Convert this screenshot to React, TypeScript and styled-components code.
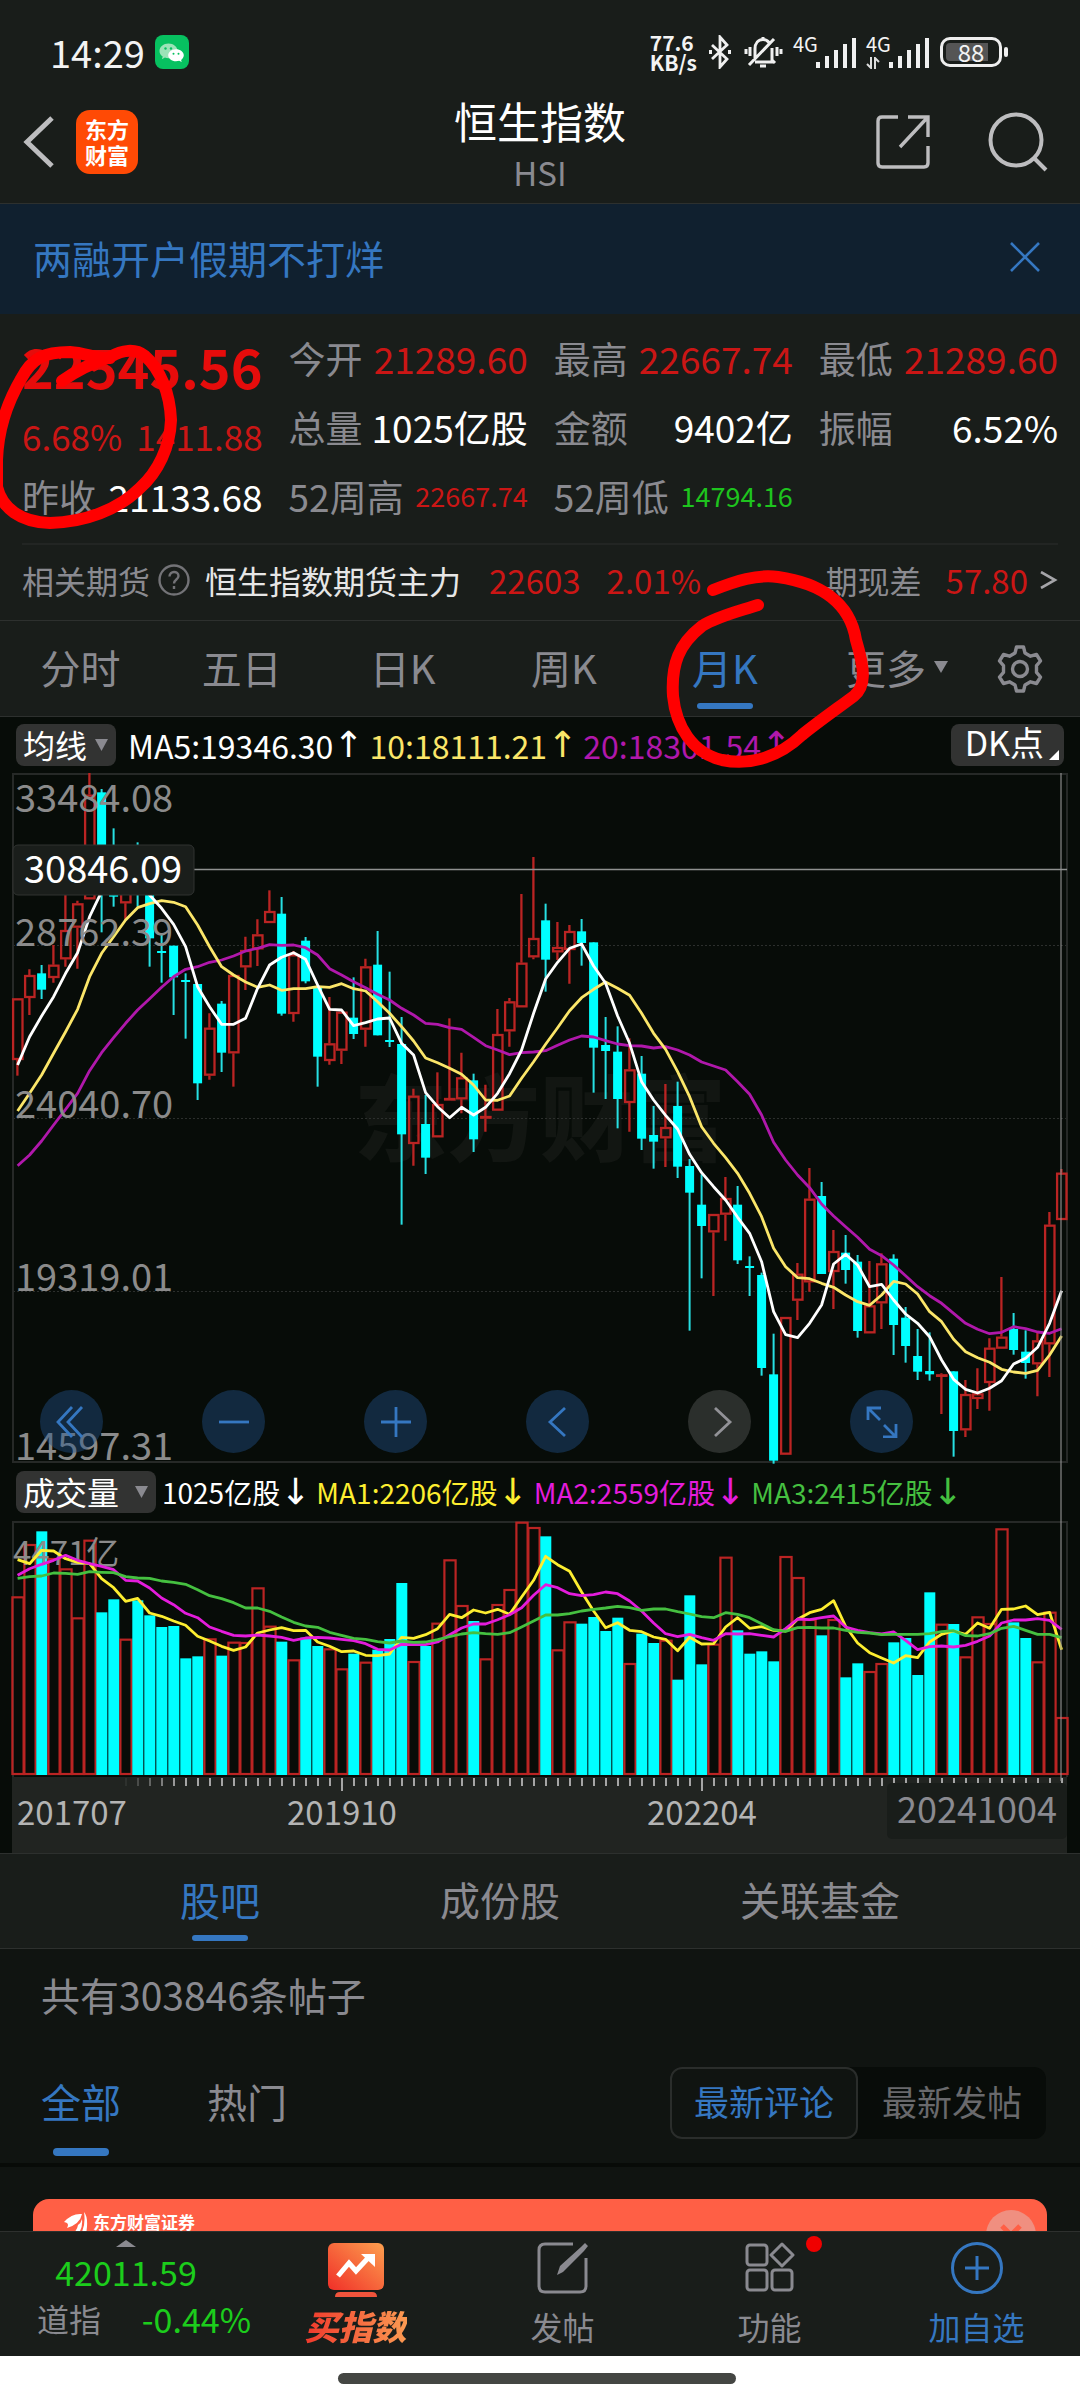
import React from "react";
import styled, { createGlobalStyle, css } from "styled-components";

const C = {
  panel: "#191d1a",
  page: "#101411",
  chart: "#070c08",
  line: "#2d302e",
  label: "#8a8a90",
  red: "#cb1615",
  hot: "#e60c0b",
  green: "#1ec41e",
  blue: "#3577c1",
  cyan: "#00ffff",
  candle: "#ba2423",
};

const Global = createGlobalStyle`
  *, *::before, *::after { box-sizing: border-box; }
  body { margin: 0; background: ${C.panel}; }
  body, button, select {
    font-family: "Noto Sans CJK SC", "Noto Sans", sans-serif;
  }
  button, select {
    appearance: none; border: 0; margin: 0; padding: 0;
    background: none; color: inherit; font-size: inherit; line-height: inherit; cursor: pointer;
  }
  a { color: inherit; text-decoration: none; }
  svg { display: block; }
`;

/* ---------- data ---------- */

type Candle = ["u" | "d", number, number, number, number];

/* kind, high, body top, body bottom, low, in thirds of a plot unit */
const candles: Candle[] = [
  ["u", 715, 715, 900, 947], ["u", 628, 645, 714, 765], ["d", 615, 640, 689, 717], ["u", 555, 614, 654, 668],
  ["u", 380, 510, 598, 620], ["u", 422, 430, 503, 626], ["u", 39, 104, 418, 418], ["d", 87, 97, 300, 517],
  ["d", 205, 290, 410, 440], ["u", 280, 320, 430, 480], ["d", 247, 290, 380, 440], ["d", 300, 330, 535, 620],
  ["d", 520, 573, 577, 668], ["d", 557, 557, 652, 765], ["d", 640, 660, 666, 836], ["d", 672, 672, 970, 1020],
  ["u", 760, 803, 947, 959], ["d", 723, 731, 878, 936], ["u", 645, 645, 880, 980], ["u", 530, 570, 622, 690],
  ["u", 478, 523, 568, 618], ["u", 391, 453, 489, 489], ["d", 411, 461, 761, 767], ["u", 573, 583, 762, 785],
  ["d", 531, 542, 664, 670], ["d", 680, 682, 890, 980], ["u", 711, 850, 903, 914], ["u", 755, 755, 872, 912],
  ["d", 652, 773, 822, 837], ["u", 596, 619, 809, 860], ["d", 513, 614, 826, 826], ["d", 635, 840, 846, 861],
  ["d", 771, 852, 1123, 1394], ["u", 986, 1007, 1152, 1217], ["d", 1005, 1092, 1193, 1242], ["u", 937, 1032, 1132, 1132],
  ["u", 775, 1014, 1019, 1019], ["u", 878, 952, 1018, 1060], ["d", 941, 961, 1138, 1176], ["u", 974, 1068, 1076, 1115],
  ["u", 747, 822, 1052, 1052], ["u", 714, 724, 814, 860], ["u", 402, 608, 742, 742], ["u", 291, 534, 592, 598],
  ["d", 431, 481, 599, 695], ["u", 486, 561, 577, 600], ["u", 495, 513, 570, 671], ["d", 477, 514, 549, 617],
  ["d", 547, 547, 863, 998], ["d", 771, 855, 873, 1017], ["d", 799, 875, 1017, 1105], ["u", 835, 928, 1029, 1115],
  ["d", 888, 941, 1136, 1170], ["d", 1038, 1125, 1145, 1226], ["u", 972, 1101, 1135, 1221], ["d", 965, 1038, 1220, 1254],
  ["d", 1197, 1218, 1298, 1712], ["d", 1243, 1334, 1398, 1555], ["u", 1362, 1362, 1417, 1608], ["u", 1251, 1314, 1364, 1442],
  ["d", 1278, 1334, 1501, 1512], ["d", 1489, 1518, 1523, 1608], ["d", 1538, 1545, 1824, 1847], ["d", 1721, 1843, 2102, 2111],
  ["u", 1671, 1671, 2084, 2084], ["u", 1509, 1541, 1622, 1680], ["u", 1224, 1316, 1567, 1595], ["d", 1266, 1308, 1542, 1542],
  ["u", 1410, 1473, 1536, 1647], ["d", 1425, 1478, 1530, 1571], ["d", 1485, 1505, 1713, 1733], ["u", 1503, 1636, 1720, 1720],
  ["u", 1480, 1510, 1630, 1707], ["d", 1483, 1496, 1695, 1785], ["d", 1641, 1673, 1758, 1808], ["d", 1707, 1788, 1835, 1860],
  ["d", 1717, 1833, 1843, 1862], ["u", 1840, 1843, 1848, 1962], ["d", 1834, 1834, 2013, 2090], ["u", 1860, 1902, 2011, 2031],
  ["u", 1825, 1900, 1917, 1947], ["u", 1735, 1763, 1869, 1952], ["u", 1551, 1730, 1766, 1766], ["d", 1659, 1707, 1770, 1784],
  ["d", 1711, 1775, 1809, 1856], ["u", 1718, 1741, 1813, 1909], ["u", 1356, 1394, 1753, 1851], ["u", 1227, 1238, 1380, 1380],
];

const ma5 = [915, 830, 768, 710, 640, 578, 470, 395, 340, 310, 335, 405, 445, 493, 560, 680, 740, 793, 793, 775, 685, 615, 592, 578, 598, 675, 748, 750, 797, 788, 777, 774, 850, 885, 998, 1040, 1073, 1042, 1065, 1042, 1000, 941, 870, 760, 657, 607, 565, 552, 618, 670, 768, 850, 965, 1020, 1066, 1107, 1183, 1238, 1280, 1320, 1372, 1420, 1505, 1655, 1724, 1733, 1690, 1635, 1512, 1483, 1515, 1580, 1573, 1620, 1662, 1690, 1730, 1800, 1858, 1888, 1899, 1885, 1862, 1812, 1795, 1762, 1690, 1592];
const ma10 = [1053, 1000, 945, 880, 815, 748, 650, 580, 530, 480, 443, 431, 422, 427, 440, 495, 560, 620, 645, 666, 682, 675, 691, 686, 686, 680, 682, 671, 686, 693, 725, 760, 800, 843, 894, 908, 925, 943, 975, 1020, 1021, 1008, 955, 905, 853, 803, 752, 713, 688, 666, 685, 706, 760, 820, 868, 935, 1010, 1100, 1150, 1193, 1240, 1300, 1370, 1465, 1520, 1553, 1556, 1570, 1582, 1605, 1625, 1636, 1605, 1564, 1572, 1602, 1655, 1685, 1738, 1775, 1793, 1807, 1828, 1836, 1840, 1831, 1785, 1728];
const ma20 = [1217, 1185, 1143, 1095, 1048, 1000, 932, 878, 833, 790, 750, 716, 682, 650, 628, 620, 607, 600, 588, 573, 565, 554, 556, 555, 563, 585, 626, 645, 665, 683, 703, 720, 745, 765, 790, 793, 803, 808, 832, 857, 870, 884, 878, 876, 872, 856, 840, 828, 831, 842, 852, 857, 858, 864, 860, 870, 885, 906, 918, 930, 965, 1003, 1065, 1147, 1200, 1245, 1283, 1332, 1368, 1400, 1432, 1468, 1487, 1515, 1547, 1580, 1607, 1630, 1660, 1690, 1708, 1721, 1717, 1700, 1706, 1716, 1720, 1706];

const volumes = [288, 131, 93, 173, 204, 351, 118, 336, 297, 415, 300, 345, 380, 377, 474, 468, 414, 466, 424, 425, 261, 376, 424, 477, 412, 437, 444, 504, 460, 484, 448, 416, 248, 482, 437, 367, 177, 314, 362, 474, 311, 266, 64, 80, 108, 447, 363, 370, 350, 392, 352, 488, 400, 428, 418, 538, 285, 492, 430, 169, 390, 460, 453, 483, 167, 230, 356, 405, 356, 531, 489, 512, 488, 426, 413, 524, 276, 370, 371, 468, 348, 368, 84, 366, 413, 483, 334, 650];
const vol1 = [178, 190, 150, 152, 175, 186, 190, 235, 262, 303, 294, 338, 348, 362, 375, 408, 422, 438, 450, 440, 398, 389, 382, 391, 390, 425, 438, 454, 452, 465, 466, 461, 411, 414, 403, 385, 342, 352, 329, 338, 327, 342, 290, 240, 168, 193, 213, 275, 332, 382, 367, 390, 394, 410, 417, 451, 411, 431, 430, 380, 352, 384, 379, 390, 392, 357, 337, 327, 301, 378, 428, 457, 473, 488, 466, 472, 425, 402, 392, 402, 368, 384, 327, 326, 317, 343, 336, 448];
const vol2 = [225, 205, 192, 180, 165, 180, 190, 198, 208, 240, 242, 263, 293, 313, 339, 352, 380, 393, 405, 407, 404, 407, 411, 420, 413, 411, 413, 417, 421, 430, 447, 449, 432, 433, 433, 425, 403, 383, 371, 371, 358, 343, 322, 285, 253, 262, 280, 286, 283, 275, 280, 302, 332, 368, 400, 409, 402, 412, 420, 400, 401, 400, 405, 410, 385, 356, 358, 352, 347, 380, 390, 397, 401, 395, 420, 448, 439, 437, 440, 435, 423, 407, 368, 359, 359, 355, 360, 387];
const vol3 = [234, 229, 227, 218, 219, 222, 214, 216, 217, 229, 233, 234, 242, 246, 252, 268, 286, 295, 307, 323, 323, 333, 350, 366, 377, 381, 396, 405, 414, 417, 424, 428, 422, 426, 425, 418, 409, 401, 397, 400, 402, 397, 380, 362, 344, 344, 340, 332, 327, 323, 318, 322, 330, 326, 326, 334, 341, 349, 352, 337, 342, 352, 370, 388, 393, 382, 381, 383, 383, 390, 396, 398, 403, 402, 402, 402, 400, 394, 391, 406, 407, 400, 384, 378, 390, 402, 402, 412];

const xAt = (i: number) => 17.6 + i * 12;
const priceY = (v: number) => (v - 39) / 3;
const volumeY = (v: number) => (v - 62) / 3;
const points = (values: number[], y: (v: number) => number) =>
  values.map((v, i) => `${xAt(i).toFixed(1)},${y(v).toFixed(1)}`).join(" ");

/* ---------- layout ---------- */

const Screen = styled.div`
  position: relative;
  display: flex;
  flex-direction: column;
  height: 100vh;
  overflow: hidden;
  background: ${C.panel};
  color: #fff;
`;

const StatusBar = styled.div`
  display: flex;
  align-items: center;
  justify-content: space-between;
  height: 88px;
  padding: 16px 72px 0 50px;
`;
const StatusGroup = styled.div<{ $gap: number }>`
  display: flex;
  align-items: center;
  gap: ${(p) => p.$gap}px;
  color: #f3f3f3;
`;
const Clock = styled.span`
  font-size: 38px;
  line-height: 44px;
`;
const NetSpeed = styled.span`
  font: 700 21px/20px "Noto Sans CJK SC", sans-serif;
  text-align: left;
`;
const Signal = styled.span`
  display: flex;
`;
const SignalTag = styled.span`
  display: flex;
  flex-direction: column;
  gap: 4px;
  width: 23px;
  height: 34px;
  font: 400 20px/18px "Noto Sans CJK SC", sans-serif;
`;
const Battery = styled.span`
  display: flex;
  align-items: center;
  gap: 2px;
  &::after {
    content: "";
    width: 4px;
    height: 10px;
    border-radius: 2px;
    background: #eee;
  }
`;
const BatteryBody = styled.span`
  display: grid;
  padding: 3px;
  width: 62px;
  height: 30px;
  border: 3px solid #eee;
  border-radius: 10px;
  span {
    border-radius: 4px;
    background: linear-gradient(90deg, #555 84%, transparent 84%);
    font-size: 24px;
    line-height: 18px;
    text-align: center;
  }
`;

const Header = styled.header`
  display: grid;
  grid-template-columns: 1fr auto 1fr;
  align-items: center;
  height: 116px;
  padding: 0 32px 8px;
  border-bottom: 1px solid ${C.line};
`;
const HeaderSide = styled.div<{ $end?: boolean }>`
  display: flex;
  align-items: center;
  gap: ${(p) => (p.$end ? 58 : 18)}px;
  justify-content: ${(p) => (p.$end ? "flex-end" : "flex-start")};
  margin-left: ${(p) => (p.$end ? 0 : -10)}px;
`;
const AppLogo = styled.a`
  width: 62px;
  height: 64px;
  padding-top: 5px;
  border-radius: 14px;
  background: #ff4a05;
  color: #fff;
  font-size: 22px;
  font-weight: 700;
  line-height: 26px;
  text-align: center;
`;
const Title = styled.h1`
  margin: 0;
  font-size: 43px;
  font-weight: 400;
  line-height: 60px;
  text-align: center;
`;
const Ticker = styled.div`
  color: ${C.label};
  font-size: 33px;
  line-height: 44px;
  text-align: center;
`;

const Banner = styled.div`
  display: flex;
  align-items: center;
  justify-content: space-between;
  height: 110px;
  padding: 0 40px 4px 33px;
  background: #10202f;
  color: ${C.blue};
  font-size: 39px;
`;

const Quote = styled.section`
  display: grid;
  grid-template-columns: repeat(4, 1fr);
  column-gap: 26px;
  margin: 0 22px;
  padding: 9px 0 13px;
  border-bottom: 2px solid #222523;
`;
const QuoteCell = styled.div`
  display: flex;
  align-items: center;
  justify-content: space-between;
  height: 69px;
  font-size: 37px;
  white-space: nowrap;
`;
const Muted = styled.span`
  color: ${C.label};
`;
const Value = styled.span<{ $tone?: string; $small?: boolean }>`
  color: ${(p) => p.$tone ?? "#fff"};
  font-size: ${(p) => (p.$small ? 27 : 37)}px;
`;
const LastPrice = styled.strong`
  padding-top: 16px;
  color: ${C.hot};
  font-size: 54px;
  font-weight: 700;
  line-height: 54px;
`;
const Change = styled.span`
  padding-top: 18px;
  color: ${C.red};
  font-size: 35px;
`;

const Futures = styled.a`
  display: flex;
  align-items: center;
  height: 75px;
  padding: 0 22px 6px;
  color: #e6e6e6;
  font-size: 32px;
  white-space: nowrap;
`;
const FuturesItem = styled.span<{ $tone?: string; $gap?: number; $push?: boolean; $figure?: boolean }>`
  color: ${(p) => p.$tone ?? "inherit"};
  font-size: ${(p) => (p.$figure ? 33 : 32)}px;
  margin-left: ${(p) => (p.$push ? "auto" : `${p.$gap ?? 0}px`)};
`;

const Tabs = styled.nav`
  display: flex;
  align-items: center;
  height: 97px;
  padding-right: 6px;
  border-top: 1px solid ${C.line};
  border-bottom: 1px solid ${C.line};
`;
const Tab = styled.button<{ $on?: boolean; $fit?: boolean }>`
  position: relative;
  display: flex;
  align-items: center;
  justify-content: center;
  flex: ${(p) => (p.$fit ? "none" : "3 1 0")};
  height: 100%;
  padding-bottom: 4px;
  color: ${(p) => (p.$on ? C.blue : C.label)};
  font-size: 40px;
  ${(p) =>
    p.$on &&
    css`
      &::after {
        content: "";
        position: absolute;
        bottom: 7px;
        left: 50%;
        width: 56px;
        height: 6px;
        margin-left: -28px;
        border-radius: 3px;
        background: ${C.blue};
      }
    `}
`;
const TabCaret = styled.span`
  width: 0;
  svg {
    margin-left: 8px;
  }
`;
const SettingsButton = styled.button`
  display: grid;
  flex: 2 1 0;
  place-items: center;
`;

const ChartArea = styled.section`
  position: relative;
  background: ${C.chart};
`;
const Legend = styled.div<{ $size: number }>`
  display: flex;
  align-items: center;
  gap: 6px;
  height: ${(p) => (p.$size > 30 ? 56 : 58)}px;
  padding: 0 16px;
  font-size: ${(p) => p.$size}px;
  white-space: nowrap;
`;
const LegendItem = styled.span<{ $tone: string }>`
  display: flex;
  align-items: center;
  color: ${(p) => p.$tone};
  i {
    font: normal 36px/40px "DejaVu Sans", sans-serif;
  }
`;
const Picker = styled.label<{ $gap: number; $after: number }>`
  position: relative;
  display: flex;
  align-items: center;
  height: 42px;
  margin-right: ${(p) => p.$after}px;
  border-radius: 8px;
  background: #323332;
  color: #fff;
  font-size: 32px;
  select {
    height: 42px;
    padding: 0 ${(p) => p.$gap + 20}px 2px 7px;
    line-height: 40px;
  }
  svg {
    position: absolute;
    right: 8px;
    pointer-events: none;
  }
`;
const DkButton = styled.button`
  display: flex;
  align-items: flex-end;
  gap: 5px;
  height: 42px;
  margin-left: auto;
  padding: 0 5px 6px 14px;
  border-radius: 8px;
  background: #323332;
  font-size: 34px;
  line-height: 36px;
`;
const Plot = styled.div`
  position: relative;
  svg.plot {
    width: 100%;
    height: auto;
    overflow: visible;
  }
`;
const PlotTools = styled.div`
  position: absolute;
  right: 0;
  bottom: 10px;
  left: 0;
  display: flex;
  justify-content: space-between;
  padding: 0 167px 0 40px;
`;
const ToolButton = styled.button<{ $off?: boolean }>`
  display: grid;
  place-items: center;
  width: 63px;
  height: 63px;
  border-radius: 50%;
  background: ${(p) => (p.$off ? "rgba(120, 120, 120, 0.32)" : "rgba(33, 83, 140, 0.42)")};
  color: ${(p) => (p.$off ? "#929297" : C.blue)};
`;
const Crosshair = styled.div`
  position: absolute;
  top: 56px;
  right: 18px;
  bottom: 72px;
  width: 2px;
  background: rgba(150, 150, 150, 0.55);
`;
const AxisText = styled.text`
  font-family: "Noto Sans CJK SC", sans-serif;
`;

const Sections = styled.nav`
  display: flex;
  justify-content: space-evenly;
  height: 96px;
  border-top: 1px solid ${C.line};
  border-bottom: 1px solid ${C.line};
`;
const Forum = styled.section`
  display: flex;
  flex-direction: column;
  background: ${C.page};
  border-bottom: 4px solid #080b08;
`;
const PostCount = styled.p`
  margin: 0;
  padding: 17px 41px 0;
  color: ${C.label};
  font-size: 39px;
  line-height: 56px;
`;
const ForumBar = styled.div`
  display: flex;
  align-items: center;
  gap: 86px;
  height: 141px;
  padding: 20px 34px 0 41px;
`;
const ForumTab = styled(Tab)`
  height: 110px;
  flex: none;
  &::after {
    bottom: 2px;
    height: 8px;
    border-radius: 4px;
  }
`;
const Segmented = styled.div`
  display: flex;
  height: 72px;
  margin-left: auto;
  border-radius: 12px;
  background: #080c09;
`;
const Segment = styled.button<{ $on?: boolean }>`
  width: 188px;
  padding-bottom: 4px;
  border: 2px solid ${(p) => (p.$on ? "#2a2d2b" : "transparent")};
  border-radius: 12px;
  background: ${(p) => (p.$on ? C.page : "transparent")};
  color: ${(p) => (p.$on ? C.blue : "#69696c")};
  font-size: 35px;
`;

const Feed = styled.main`
  flex: 1 1 0;
  min-height: 0;
  overflow: hidden;
  padding: 32px 33px 0;
  background: ${C.page};
`;
const Promo = styled.a`
  display: flex;
  align-items: flex-start;
  justify-content: space-between;
  height: 180px;
  padding: 11px 11px 0 31px;
  border-radius: 16px;
  background: #ff5f45;
`;
const PromoBrand = styled.span`
  display: flex;
  align-items: center;
  gap: 3px;
  color: #fff;
  font-size: 17px;
  font-weight: 700;
  line-height: 22px;
`;
const PromoClose = styled.span`
  display: grid;
  place-items: center;
  width: 50px;
  height: 50px;
  border-radius: 50%;
  background: #f08f80;
`;

const BottomNav = styled.nav`
  display: grid;
  grid-template-columns: 252fr repeat(4, 207fr);
  height: 125px;
  border-top: 1px solid ${C.line};
`;
const NavItem = styled.button<{ $tone?: string }>`
  position: relative;
  display: flex;
  flex-direction: column;
  align-items: center;
  justify-content: space-between;
  padding: 7px 0 9px;
  color: ${(p) => p.$tone ?? C.label};
  font-size: 32px;
  line-height: 42px;
`;
const Market = styled.a`
  display: flex;
  flex-direction: column;
  align-items: center;
  gap: 2px;
  padding: 8px 0 0;
  color: #1ccd1c;
  font-size: 34px;
  line-height: 45px;
`;
const MarketRow = styled.span`
  display: flex;
  justify-content: space-between;
  align-self: stretch;
  padding: 0 1px 0 37px;
  span {
    color: ${C.label};
    font-size: 32px;
  }
`;
const BuyLabel = styled.span`
  background: linear-gradient(90deg, #f0392c, #fb9a52);
  background-clip: text;
  -webkit-background-clip: text;
  color: transparent;
  font-size: 34px;
  font-style: italic;
  font-weight: 900;
`;
const Dot = styled.span`
  position: absolute;
  top: 4px;
  left: calc(50% + 36px);
  width: 16px;
  height: 16px;
  border-radius: 50%;
  background: #f00000;
`;
const HomeArea = styled.div`
  display: grid;
  place-items: center;
  height: 44px;
  background: #fff;
  padding-right: 6px;
  &::after {
    content: "";
    width: 37%;
    height: 11px;
    border-radius: 6px;
    background: #444643;
  }
`;
const Scribble = styled.svg`
  position: absolute;
  top: 0;
  left: 0;
  width: 100%;
  pointer-events: none;
`;

/* ---------- pieces ---------- */

const Triangle = ({ w, h, up }: { w: number; h: number; up?: boolean }) => (
  <svg width={w} height={h} viewBox="0 0 10 10" preserveAspectRatio="none" aria-hidden="true">
    <path d={up ? "M0 10h10L5 0z" : "M0 0h10L5 10z"} fill="#8a8a90" />
  </svg>
);

const Bars = () => (
  <svg width="41" height="34" viewBox="0 0 41 34" fill="#f0f0f0" aria-hidden="true">
    <rect x="0" y="27" width="4" height="6" />
    <rect x="9" y="21" width="4" height="12" />
    <rect x="18" y="15" width="4" height="18" />
    <rect x="27" y="9" width="4" height="24" />
    <rect x="36" y="3" width="4" height="30" />
  </svg>
);

const PriceChart = () => (
  <svg className="plot" viewBox="0 0 1080 690" role="img" aria-label="恒生指数 月K">
    <text x="354" y="381" fontSize="93" fontWeight="900" fill="#121612" fontFamily='"Noto Sans CJK SC", sans-serif'>东方财富</text>
    <g stroke="#2c2f2d" strokeWidth="1" strokeDasharray="2 2">
      <path d="M13 172.500H1067M13 345.500H1067M13 518.500H1067" />
    </g>
    <path d="M13 1H1067V689H13Z" fill="none" stroke="#262927" strokeWidth="2" />
    {candles.map(([kind, high, top, bottom, low], i) => {
      const x = xAt(i);
      const h = Math.max(2, (bottom - top) / 3);
      return kind === "d" ? (
        <g key={i}>
          <rect x={x - 1} y={priceY(high)} width="2" height={(low - high) / 3} fill="#27dfe2" />
          <rect x={x - 4.5} y={priceY(top)} width="9" height={h} fill={C.cyan} />
        </g>
      ) : (
        <g key={i} fill="none" stroke={C.candle} strokeWidth="2.300">
          <path d={`M${x - 0.2} ${priceY(high)}V${priceY(top)}M${x - 0.2} ${priceY(bottom)}V${priceY(low)}`} />
          <rect x={x - 4.5} y={priceY(top) + 1} width="9.400" height={Math.max(0.5, h - 2)} />
        </g>
      );
    })}
    <g fill="none" strokeWidth="2.800" strokeLinejoin="round">
      <polyline points={points(ma20, priceY)} stroke="#b018ab" />
      <polyline points={points(ma10, priceY)} stroke="#fbe669" />
      <polyline points={points(ma5, priceY)} stroke="#fff" />
    </g>
    <g fill="#8b8b8b" fontSize="38">
      <AxisText x="15" y="39">33484.08</AxisText>
      <AxisText x="15" y="173">28762.39</AxisText>
      <AxisText x="15" y="345">24040.70</AxisText>
      <AxisText x="15" y="518">19319.01</AxisText>
      <AxisText x="15" y="687">14597.31</AxisText>
    </g>
    <path d="M194 96.500H1067" stroke="#8f9190" strokeWidth="1.500" />
    <rect x="13" y="72" width="181" height="50" rx="5" fill="#1a1e1b" stroke="#303331" />
    <AxisText x="24" y="110" fill="#fff" fontSize="38">30846.09</AxisText>
  </svg>
);

const VolumeChart = () => (
  <svg className="plot" viewBox="0 0 1080 332" role="img" aria-label="成交量">
    <path d="M13 256V1H1067V256" fill="none" stroke="#262927" strokeWidth="2" />
    {volumes.map((v, i) => {
      const x = xAt(i);
      const y = volumeY(v);
      return candles[i][0] === "d" ? (
        <rect key={i} x={x - 5.3} y={y} width="11" height={254 - y} fill={C.cyan} />
      ) : (
        <rect key={i} x={x - 5.2} y={y + 1} width="11.200" height={252 - y} fill="none" stroke={C.candle} strokeWidth="2.200" />
      );
    })}
    <AxisText x="13" y="44" fill="#8b8b8b" fontSize="33">4471亿</AxisText>
    <g fill="none" strokeWidth="2.800" strokeLinejoin="round">
      <polyline points={points(vol1, volumeY)} stroke="#fdee30" />
      <polyline points={points(vol2, volumeY)} stroke="#e41cdc" />
      <polyline points={points(vol3, volumeY)} stroke="#45c040" />
    </g>
    <rect x="12" y="256" width="1055" height="76" fill="#212421" />
    {Array.from({ length: 79 }, (_, i) => {
      const x = 126 + i * 12;
      const major = x === 342 || x === 702;
      return (
        <rect key={i} x={x - 1} y="257" width="2" height={major ? 13 : 8} fill="#a5a5a5" opacity={Math.min(1, (i + 0.5) / 5)} />
      );
    })}
    <g fill="#b4b4b4" fontSize="33">
      <AxisText x="17" y="304">201707</AxisText>
      <AxisText x="342" y="304" textAnchor="middle">201910</AxisText>
      <AxisText x="702" y="304" textAnchor="middle">202204</AxisText>
    </g>
    <rect x="887" y="262" width="180" height="56" rx="5" fill="#191d1a" />
    <AxisText x="977" y="302" textAnchor="middle" fill="#8a8a90" fontSize="36">20241004</AxisText>
  </svg>
);

const tools: { label: string; d: string; off?: boolean }[] = [
  { label: "最早", d: "M16 1L2 16l14 15M26 1L12 16l14 15" },
  { label: "缩小", d: "M1 16h30" },
  { label: "放大", d: "M1 16h30M16 1v30" },
  { label: "向左", d: "M23 2L8 16l15 14" },
  { label: "向右", d: "M11 2l15 14-15 14", off: true },
  { label: "全屏", d: "M2 14V2h13M2 2l12 12M18 19l12 12M17 31h13V18" },
];

const stats: React.ReactNode[] = [
  <LastPrice key="p">22545.56</LastPrice>,
  <React.Fragment key="a"><Muted>今开</Muted><Value $tone={C.red}>21289.60</Value></React.Fragment>,
  <React.Fragment key="b"><Muted>最高</Muted><Value $tone={C.red}>22667.74</Value></React.Fragment>,
  <React.Fragment key="c"><Muted>最低</Muted><Value $tone={C.red}>21289.60</Value></React.Fragment>,
  <React.Fragment key="d"><Change>6.68%</Change><Change>1411.88</Change></React.Fragment>,
  <React.Fragment key="e"><Muted>总量</Muted><Value>1025亿股</Value></React.Fragment>,
  <React.Fragment key="f"><Muted>金额</Muted><Value>9402亿</Value></React.Fragment>,
  <React.Fragment key="g"><Muted>振幅</Muted><Value>6.52%</Value></React.Fragment>,
  <React.Fragment key="h"><Muted>昨收</Muted><Value>21133.68</Value></React.Fragment>,
  <React.Fragment key="i"><Muted>52周高</Muted><Value $tone={C.red} $small>22667.74</Value></React.Fragment>,
  <React.Fragment key="j"><Muted>52周低</Muted><Value $tone={C.green} $small>14794.16</Value></React.Fragment>,
];

export default function App() {
  return (
    <Screen>
      <Global />
      <StatusBar>
        <StatusGroup $gap={10}>
          <Clock>14:29</Clock>
          <svg width="34" height="34" viewBox="0 0 34 34" aria-hidden="true">
            <rect width="34" height="34" rx="8" fill="#07c160" />
            <path d="M13.500 8.500c-5 0-9 3.300-9 7.400 0 2.300 1.300 4.300 3.200 5.700l-.8 2.600 3-1.600c1.100.4 2.300.6 3.600.6 5 0 9-3.200 9-7.300s-4-7.400-9-7.400z" fill="#9be3b8" />
            <path d="M21 14.200c4.300 0 7.800 2.700 7.800 6.100 0 1.900-1.100 3.500-2.700 4.600l.6 2.100-2.500-1.200c-1 .3-2 .5-3.200.5-4.300 0-7.800-2.700-7.800-6s3.500-6.100 7.800-6.100z" fill="#fff" />
            <g fill="#07c160"><circle cx="10.500" cy="13.500" r="1.200" /><circle cx="16" cy="13.500" r="1.200" /><circle cx="18.500" cy="18.700" r="1" /><circle cx="23.500" cy="18.700" r="1" /></g>
          </svg>
        </StatusGroup>
        <StatusGroup $gap={10}>
          <NetSpeed>77.6<br />KB/s</NetSpeed>
          <svg width="26" height="34" viewBox="0 0 26 34" fill="none" stroke="#f0f0f0" strokeWidth="2.800" aria-hidden="true">
            <path d="M5 10l15 14-7 8V2l7 8L5 24" />
            <path d="M2 17h3M21 17h3" strokeWidth="4" />
          </svg>
          <svg width="40" height="34" viewBox="0 0 40 34" fill="none" stroke="#f0f0f0" strokeWidth="3" aria-hidden="true">
            <path d="M12 27h18M12 25V14c0-6 3.500-9.500 8-9.500 2.500 0 4.500 1 6 3M29 13v12l3 3M20 2v2M17 31h6M6 30L31 4M7 12v9M3 14v5M34 12v9M38 14v5" />
          </svg>
          <StatusGroup $gap={9}>
            <Signal><SignalTag>4G</SignalTag><Bars /></Signal>
            <Signal>
              <SignalTag>
                4G
                <svg width="14" height="12" viewBox="0 0 14 12" fill="none" stroke="#ddd" strokeWidth="2" aria-hidden="true"><path d="M5 0v11L1 7M9 12V1l4 4" /></svg>
              </SignalTag>
              <Bars />
            </Signal>
          </StatusGroup>
          <Battery><BatteryBody><span>88</span></BatteryBody></Battery>
        </StatusGroup>
      </StatusBar>

      <Header>
        <HeaderSide>
          <button aria-label="返回">
            <svg width="36" height="52" viewBox="0 0 36 52" fill="none" stroke="#bdbdbf" strokeWidth="5"><path d="M30 2L5 26l25 24" /></svg>
          </button>
          <AppLogo href="#home">东方<br />财富</AppLogo>
        </HeaderSide>
        <div>
          <Title>恒生指数</Title>
          <Ticker>HSI</Ticker>
        </div>
        <HeaderSide $end>
          <button aria-label="分享">
            <svg width="54" height="54" viewBox="0 0 54 54" fill="none" stroke="#bdbdbf" strokeWidth="3.400">
              <path d="M22 2H6q-4 0-4 4v42q0 4 4 4h42q4 0 4-4V31M32 2h20v20M51 3L24 32" />
            </svg>
          </button>
          <button aria-label="搜索">
            <svg width="60" height="60" viewBox="0 0 60 60" fill="none" stroke="#bdbdbf" strokeWidth="4">
              <circle cx="28" cy="28" r="25.500" /><path d="M46 46l12 12" />
            </svg>
          </button>
        </HeaderSide>
      </Header>

      <Banner>
        <a href="#notice">两融开户假期不打烊</a>
        <button aria-label="关闭">
          <svg width="30" height="30" viewBox="0 0 30 30" stroke={C.blue} strokeWidth="2.600"><path d="M1 1l28 28M29 1L1 29" /></svg>
        </button>
      </Banner>

      <Quote>{stats.map((s, i) => <QuoteCell key={i}>{s}</QuoteCell>)}</Quote>

      <Futures href="#futures">
        <FuturesItem $tone={C.label}>相关期货</FuturesItem>
        <FuturesItem $gap={8}>
          <svg width="32" height="32" viewBox="0 0 32 32" fill="none" stroke="#737377" strokeWidth="2.400" aria-hidden="true">
            <circle cx="16" cy="16" r="14.500" /><path d="M11.500 12.500c0-6 9-6 9-.5 0 3.500-4.500 3.500-4.500 7.500M16 22v3" />
          </svg>
        </FuturesItem>
        <FuturesItem $gap={15}>恒生指数期货主力</FuturesItem>
        <FuturesItem $gap={28} $figure $tone={C.red}>22603</FuturesItem>
        <FuturesItem $gap={26} $figure $tone={C.red}>2.01%</FuturesItem>
        <FuturesItem $push $tone={C.label}>期现差</FuturesItem>
        <FuturesItem $gap={24} $figure $tone={C.red}>57.80</FuturesItem>
        <FuturesItem $gap={12}>
          <svg width="18" height="18" viewBox="0 0 18 18" fill="none" stroke="#a5a5a9" strokeWidth="2.600" aria-hidden="true"><path d="M1 1l14 8-14 8" /></svg>
        </FuturesItem>
      </Futures>

      <Tabs>
        <Tab>分时</Tab>
        <Tab>五日</Tab>
        <Tab>日K</Tab>
        <Tab>周K</Tab>
        <Tab $on>月K</Tab>
        <Tab>更多<TabCaret><Triangle w={14} h={12} /></TabCaret></Tab>
        <SettingsButton aria-label="设置">
          <svg width="48" height="48" viewBox="0 0 48 48" fill="none" stroke={C.label} strokeWidth="3.400" strokeLinejoin="round">
            <path d="M20.500 2h7l1.500 6 5.500 3.200 6-1.700 4 6.500-4 4.600v6.800l4 4.600-4 6.500-6-1.700L29 40l-1.500 6h-7L19 40l-5.500-3.200-6 1.700-4-6.500 4-4.600v-6.800l-4-4.600 4-6.500 6 1.700L19 8z" />
            <circle cx="24" cy="24" r="7.500" />
          </svg>
        </SettingsButton>
      </Tabs>

      <ChartArea>
        <Legend $size={32}>
          <Picker $gap={8} $after={6}>
            <select aria-label="主图指标"><option>均线</option></select>
            <Triangle w={13} h={12} />
          </Picker>
          <LegendItem $tone="#fff">MA5:19346.30<i>↑</i></LegendItem>
          <LegendItem $tone="#fbe669">10:18111.21<i>↑</i></LegendItem>
          <LegendItem $tone="#b018ab">20:18301.54<i>↑</i></LegendItem>
          <DkButton>
            DK点
            <svg width="10" height="10" viewBox="0 0 10 10" fill="#fff" aria-hidden="true"><path d="M10 0v10H0z" /></svg>
          </DkButton>
        </Legend>
        <Plot>
          <PriceChart />
          <PlotTools>
            {tools.map((t) => (
              <ToolButton key={t.label} aria-label={t.label} $off={t.off}>
                <svg width="32" height="32" viewBox="0 0 32 32" fill="none" stroke="currentColor" strokeWidth="2.800"><path d={t.d} /></svg>
              </ToolButton>
            ))}
          </PlotTools>
        </Plot>
        <Legend $size={28}>
          <Picker $gap={16} $after={0}>
            <select aria-label="副图指标"><option>成交量</option></select>
            <Triangle w={13} h={12} />
          </Picker>
          <LegendItem $tone="#fff">1025亿股<i>↓</i></LegendItem>
          <LegendItem $tone="#fdee30">MA1:2206亿股<i>↓</i></LegendItem>
          <LegendItem $tone="#e41cdc">MA2:2559亿股<i>↓</i></LegendItem>
          <LegendItem $tone="#45c040">MA3:2415亿股<i>↓</i></LegendItem>
        </Legend>
        <Plot><VolumeChart /></Plot>
        <Crosshair />
      </ChartArea>

      <Sections>
        <Tab $fit $on>股吧</Tab>
        <Tab $fit>成份股</Tab>
        <Tab $fit>关联基金</Tab>
      </Sections>

      <Forum>
        <PostCount>共有303846条帖子</PostCount>
        <ForumBar>
          <ForumTab $on>全部</ForumTab>
          <ForumTab>热门</ForumTab>
          <Segmented>
            <Segment $on>最新评论</Segment>
            <Segment>最新发帖</Segment>
          </Segmented>
        </ForumBar>
      </Forum>

      <Feed>
        <Promo href="#promo">
          <PromoBrand>
            <svg width="26" height="24" viewBox="0 0 26 24" fill="#fff" aria-hidden="true">
              <path d="M0 12Q8 3 18 4Q16 14 3 18Q6 13 0 12zM20 2q5 6 2 22h-5q5-10 3-22zM14 15q3-2 4-6 1 9-4 15H8q5-3 6-9z" />
            </svg>
            东方财富证券
          </PromoBrand>
          <PromoClose>
            <svg width="22" height="22" viewBox="0 0 22 22" stroke="#ff5f45" strokeWidth="5" aria-hidden="true"><path d="M2 2l18 18M20 2L2 20" /></svg>
          </PromoClose>
        </Promo>
      </Feed>

      <BottomNav>
        <Market href="#dow">
          <Triangle w={20} h={7} up />
          42011.59
          <MarketRow><span>道指</span>-0.44%</MarketRow>
        </Market>
        <NavItem>
          <svg width="56" height="58" viewBox="0 0 56 58" aria-hidden="true">
            <defs>
              <linearGradient id="buy" x1="0" y1="1" x2="1" y2="0"><stop offset="0" stopColor="#f02f28" /><stop offset="1" stopColor="#fda04f" /></linearGradient>
            </defs>
            <rect y="4" width="56" height="47" rx="6" fill="url(#buy)" />
            <path d="M7 58q0-5 5-5h32q5 0 5 5z" fill="#f0543c" />
            <path d="M10 37l11-13 7 8 13-14" fill="none" stroke="#fff" strokeWidth="5" />
            <path d="M33 15h14v13z" fill="#fff" />
          </svg>
          <BuyLabel>买指数</BuyLabel>
        </NavItem>
        <NavItem>
          <svg width="52" height="58" viewBox="0 0 52 58" fill="none" stroke={C.label} strokeWidth="3" aria-hidden="true">
            <path d="M36 5H8q-6 0-6 6v36q0 6 6 6h35q6 0 6-6V19" />
            <path d="M20 36l3-9L44 8l4-4 3 3-4 5-21 21z" fill={C.label} stroke="none" />
          </svg>
          发帖
        </NavItem>
        <NavItem>
          <svg width="50" height="58" viewBox="0 0 50 58" fill="none" stroke={C.label} strokeWidth="3" strokeLinejoin="round" aria-hidden="true">
            <rect x="2" y="6" width="20" height="20" rx="3" /><rect x="2" y="31" width="20" height="20" rx="3" /><rect x="27" y="31" width="20" height="20" rx="3" />
            <path d="M37 5l11 11-11 11-11-11z" />
          </svg>
          功能
          <Dot />
        </NavItem>
        <NavItem $tone={C.blue}>
          <svg width="54" height="58" viewBox="0 0 54 58" fill="none" stroke={C.blue} strokeWidth="3" aria-hidden="true">
            <circle cx="27" cy="29" r="24.500" /><path d="M15 29h24M27 17v24" />
          </svg>
          加自选
        </NavItem>
      </BottomNav>
      <HomeArea />

      <Scribble viewBox="0 0 1080 800" fill="none" stroke="#ff0000" strokeWidth="12" strokeLinecap="round" strokeLinejoin="round" aria-hidden="true">
        <path d="M62 381C76 371 95 362 110 357C122 350 135 348 145 356C160 369 170 393 171 420C170 447 158 472 140 488C118 510 85 522 50 523C20 522 2 508 -3 487V460C-2 430 7 403 21 379C32 358 44 352 70 352C86 353 97 359 110 358" />
        <path d="M713 590C736 581 757 574 778 577C820 583 850 602 856 640C865 670 866 686 854 696C838 708 818 722 802 735C780 756 752 766 722 760C692 753 676 726 673 696C671 664 679 644 702 626C718 616 740 611 758 605" />
      </Scribble>
    </Screen>
  );
}
